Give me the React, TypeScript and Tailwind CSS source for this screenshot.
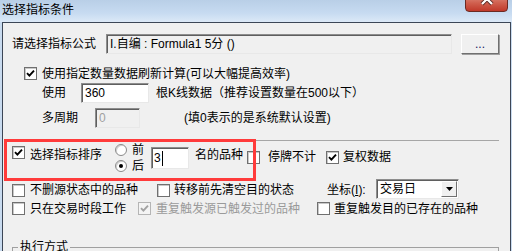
import React from "react";

function Check({ checked = false, disabled = false }: { checked?: boolean; disabled?: boolean }) {
  return (
    <div
      className={
        "w-[13px] h-[13px] shrink-0 border flex items-center justify-center " +
        (disabled ? "border-[#b5b5b5] bg-[#f4f4f4]" : "border-[#707070] bg-white shadow-[inset_1px_1px_0_#c8c8c8]")
      }
    >
      {checked && (
        <svg width="9" height="9" viewBox="0 0 9 9">
          <polyline
            points="1,4.2 3.4,6.6 8,1.6"
            fill="none"
            stroke={disabled ? "#a2a2a2" : "#000"}
            strokeWidth="1.9"
          />
        </svg>
      )}
    </div>
  );
}

function Radio({ checked = false }: { checked?: boolean }) {
  return (
    <div className="w-[12px] h-[12px] shrink-0 rounded-full border border-[#8a8a8a] bg-white flex items-center justify-center shadow-[inset_1px_1px_0_#d0d0d0]">
      {checked && <div className="w-[4px] h-[4px] rounded-full bg-black" />}
    </div>
  );
}

const sunken =
  "border border-t-[#8d8d8d] border-l-[#8d8d8d] border-r-[#e8e8e8] border-b-[#e8e8e8] shadow-[inset_1px_1px_0_#5f5f5f]";

export default function App() {
  return (
    <div className="w-[512px] h-[251px] overflow-hidden bg-[#c9dbef] font-[Liberation_Sans,Noto_Sans_CJK_SC,sans-serif] text-[12px] leading-[14px] text-black">
      {/* title bar */}
      <div className="relative h-[22px] bg-[linear-gradient(to_bottom,#b9cfe7_0%,#c7dbf1_60%,#dce9f7_100%)]">
        <div className="pl-[2px] pt-[3px] text-[12px] leading-[15px] text-black">选择指标条件</div>
        <div className="absolute left-[465px] top-[-8px] w-[43px] h-[20px] rounded-[4px] border border-[#6b2a23] bg-[linear-gradient(to_bottom,#e39a8c_0%,#d0604f_55%,#c0392a_100%)] flex justify-center items-start">
          <svg width="14" height="14" viewBox="0 0 14 14" className="mt-[-1px]">
            <path d="M2 2 L12 12 M12 2 L2 12" stroke="#5b2a25" strokeWidth="4" />
            <path d="M2 2 L12 12 M12 2 L2 12" stroke="#ffffff" strokeWidth="2.2" />
          </svg>
        </div>
      </div>

      {/* client */}
      <div className="ml-[2px] w-[509px] h-[229px] border-l border-t border-r border-[#3c4656] bg-[#f0f0f0]">
        {/* row 1 */}
        <div className="mt-[11px] h-[20px] flex items-center">
          <div className="ml-[9px] w-[94px]">请选择指标公式</div>
          <div className={"w-[346px] h-[20px] flex items-center pl-[3px] bg-[#f0f0f0] " + sunken}>
            I.自编 : Formula1 5分 ()
          </div>
          <div className="ml-[9px] w-[38px] h-[20px] border border-t-[#ffffff] border-l-[#ffffff] border-r-[#707070] border-b-[#707070] shadow-[1px_1px_0_#a0a0a0] flex items-center justify-center text-[#202060]">
            ...
          </div>
        </div>

        {/* row 2 */}
        <div className="mt-[13px] h-[13px] flex items-center">
          <div className="ml-[21px]">
            <Check checked />
          </div>
          <div className="ml-[5px] whitespace-nowrap">使用指定数量数据刷新计算(可以大幅提高效率)</div>
        </div>

        {/* row 3 */}
        <div className="mt-[3px] h-[20px] flex items-center">
          <div className="ml-[39px] w-[39px]">使用</div>
          <div className={"w-[68px] h-[20px] bg-white flex items-center pl-[3px] " + sunken}>360</div>
          <div className="ml-[7px] whitespace-nowrap">根K线数据（推荐设置数量在500以下）</div>
        </div>

        {/* row 4 */}
        <div className="mt-[5px] h-[20px] flex items-center">
          <div className="ml-[39px] w-[53px]">多周期</div>
          <div className={"w-[45px] h-[20px] bg-[#f0f0f0] text-[#a0a0a0] flex items-center pl-[3px] " + sunken}>0</div>
          <div className="ml-[44px] whitespace-nowrap">(填0表示的是系统默认设置)</div>
        </div>

        {/* row 5 */}
        <div className="relative mt-[12px] ml-[9px] w-[487px] h-[38px] border-t border-[#a6a6a6] flex items-start">
          <div className="mt-[5px]">
            <Check checked />
          </div>
          <div className="ml-[5px] mt-[7px] whitespace-nowrap">选择指标排序</div>
          <div className="ml-[13px] mt-[1px] flex flex-col">
            <div className="h-[16px] flex items-center">
              <Radio />
              <span className="ml-[5px]">前</span>
            </div>
            <div className="h-[16px] flex items-center">
              <Radio checked />
              <span className="ml-[5px]">后</span>
            </div>
          </div>
          <div className={"ml-[7px] mt-[6px] w-[38px] h-[22px] bg-white flex items-center pl-[2px] " + sunken}>
            <span>3</span>
            <span className="ml-[1px] w-[1px] h-[15px] bg-black" />
          </div>
          <div className="ml-[6px] mt-[7px] whitespace-nowrap">名的品种</div>
          <div className="ml-[4px] mt-[10px]">
            <Check />
          </div>
          <div className="ml-[8px] mt-[9px] whitespace-nowrap">停牌不计</div>
          <div className="ml-[10px] mt-[10px]">
            <Check checked />
          </div>
          <div className="ml-[4px] mt-[9px] whitespace-nowrap">复权数据</div>

          {/* red annotation box */}
          <div className="absolute left-[-8px] top-[-2px] w-[252px] h-[42px] border-[3px] border-[#ff3b3b] z-10" />
        </div>

        {/* row 6 */}
        <div className="ml-[9px] h-[20px] flex items-start">
          <div className="mt-[6px]">
            <Check />
          </div>
          <div className="ml-[5px] mt-[5px] whitespace-nowrap">不删源状态中的品种</div>
          <div className="ml-[19px] mt-[6px]">
            <Check />
          </div>
          <div className="ml-[4px] mt-[5px] whitespace-nowrap">转移前先清空目的状态</div>
          <div className="ml-[33px] mt-[5px] w-[49px] whitespace-nowrap">
            坐标(<u>I</u>):
          </div>
          <div className={"mt-[1px] w-[83px] h-[20px] bg-white flex items-center " + sunken}>
            <span className="pl-[3px] flex-1">交易日</span>
            <div className="w-[16px] h-[16px] mr-[1px] bg-[#f0f0f0] border border-t-white border-l-white border-r-[#707070] border-b-[#707070] flex items-center justify-center">
              <svg width="7" height="4" viewBox="0 0 7 4">
                <path d="M0 0 L7 0 L3.5 4 Z" fill="#000" />
              </svg>
            </div>
          </div>
        </div>

        {/* row 7 */}
        <div className="mt-[4px] ml-[9px] h-[13px] flex items-center">
          <Check />
          <div className="ml-[5px] whitespace-nowrap">只在交易时段工作</div>
          <div className="ml-[12px]">
            <Check checked disabled />
          </div>
          <div className="ml-[5px] whitespace-nowrap text-[#9a9a9a]">重复触发源已触发过的品种</div>
          <div className="ml-[17px]">
            <Check />
          </div>
          <div className="ml-[4px] whitespace-nowrap">重复触发目的已存在的品种</div>
        </div>

        {/* group box */}
        <fieldset className="mt-[25px] ml-[9px] w-[487px] h-[40px] border border-[#a0a0a0]">
          <legend className="ml-[5px] px-[2px] leading-[14px]">执行方式</legend>
        </fieldset>
      </div>
    </div>
  );
}
